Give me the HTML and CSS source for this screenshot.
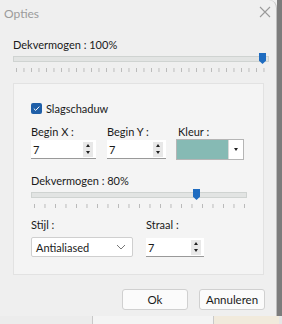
FILE: index.html
```html
<!DOCTYPE html>
<html>
<head>
<meta charset="utf-8">
<link rel="stylesheet" href="styles.css">
</head>
<body>
<div class="screen">
  <div class="dialog">
    <div class="titlebar">
      <span class="title">Opties</span>
      <svg class="close" width="12" height="12" viewBox="0 0 12 12"><path d="M1 1L11 11M11 1L1 11" stroke="#9a9a9a" stroke-width="1.1" fill="none"/></svg>
    </div>
    <div class="content">
      <div class="label">Dekvermogen : 100%</div>
      <div class="slider wide">
        <div class="track"></div>
        <div class="thumb" style="left: 246px"></div>
      </div>
      <div class="ticks wide-ticks"></div>
      <div class="group">
        <label class="check">
          <span class="box"><svg width="9" height="9" viewBox="0 0 9 9"><path d="M1.8 4.6L3.7 6.4L7.3 2.6" stroke="#fff" stroke-width="1" fill="none"/></svg></span>
          <span>Slagschaduw</span>
        </label>
        <div class="row three">
          <div class="field fx">
            <div class="flabel">Begin X :</div>
            <div class="spin"><span class="val">7</span><span class="arrows"><i class="up"></i><i class="down"></i></span></div>
          </div>
          <div class="field fy">
            <div class="flabel">Begin Y :</div>
            <div class="spin"><span class="val">7</span><span class="arrows"><i class="up"></i><i class="down"></i></span></div>
          </div>
          <div class="field fc">
            <div class="flabel">Kleur :</div>
            <div class="color"><span class="swatch"></span><span class="drop"><i class="down"></i></span></div>
          </div>
        </div>
        <div class="label inner">Dekvermogen : 80%</div>
        <div class="slider narrow">
          <div class="track"></div>
          <div class="thumb" style="left: 162px"></div>
        </div>
        <div class="ticks narrow-ticks"></div>
        <div class="row two">
          <div class="field fs">
            <div class="flabel">Stijl :</div>
            <div class="select"><span>Antialiased</span><svg width="10" height="6" viewBox="0 0 10 6"><path d="M1 1L5 5L9 1" stroke="#777" stroke-width="1" fill="none"/></svg></div>
          </div>
          <div class="field fr">
            <div class="flabel">Straal :</div>
            <div class="spin"><span class="val">7</span><span class="arrows"><i class="up"></i><i class="down"></i></span></div>
          </div>
        </div>
      </div>
      <div class="buttons">
        <button class="btn">Ok</button>
        <button class="btn">Annuleren</button>
      </div>
    </div>
  </div>
  <div class="taskstrip">
    <span class="seg s1"></span><span class="seg s2"></span><span class="seg s3"></span>
  </div>
</div>
</body>
</html>
```

FILE: styles.css
```css
html, body {
  margin: 0;
  padding: 0;
}
body {
  width: 282px;
  height: 324px;
  overflow: hidden;
  background: #8a8a8a;
  font-family: Lato, "Noto Sans", sans-serif;
  font-size: 11px;
  color: #1a1a1a;
}
.screen {
  position: relative;
  width: 282px;
  height: 324px;
  background: linear-gradient(to right, #efefef 0, #efefef 277px, #7c7c7c 277px);
}
.dialog {
  width: 277px;
  height: 316px;
  background: #efefef;
  border-top-right-radius: 8px;
  border-right: 1px solid #bdbdbd;
  box-sizing: border-box;
  display: flex;
  flex-direction: column;
}
.titlebar {
  height: 26px;
  display: flex;
  align-items: center;
  justify-content: space-between;
  padding: 0 5px 0 4px;
}
.title {
  color: #9b9b9b;
  font-size: 12px;
}
.close {
  margin-top: -2px;
}
.content {
  padding: 11px 0 0 13px;
  flex: 1;
  display: flex;
  flex-direction: column;
}
.label {
  line-height: 15px;
  height: 15px;
}
.slider {
  position: relative;
  height: 12px;
  margin-top: 1px;
}
.slider.wide { width: 256px; }
.slider.narrow { width: 216px; }
.track {
  position: absolute;
  left: 0; right: 0; top: 3px;
  height: 4px;
  background: #e2e4e3;
  border: 1px solid #cfd3d1;
}
.thumb {
  position: absolute;
  top: 0;
  width: 7px;
  height: 11px;
  background: #1f6cc0;
  clip-path: polygon(0 0, 100% 0, 100% 70%, 50% 100%, 0 70%);
}
.ticks {
  height: 4px;
  margin-top: 3px;
  background-image: linear-gradient(to right, #b9b9b9 1px, transparent 1px);
  background-repeat: repeat-x;
}
.wide-ticks {
  width: 250px;
  margin-left: 3px;
  background-size: 7.5px 4px;
}
.narrow-ticks {
  width: 212px;
  margin-left: 3px;
  background-size: 10.5px 4px;
}
.group {
  margin-top: 11px;
  width: 251px;
  height: 192px;
  box-sizing: border-box;
  background: #f4f4f4;
  border: 1px solid #e2e2e2;
  padding: 17px 0 0 17px;
}
.check {
  display: flex;
  align-items: center;
  gap: 4px;
  height: 15px;
}
.box {
  width: 11px;
  height: 11px;
  background: #1f5fa8;
  border-radius: 2px;
  display: flex;
  align-items: center;
  justify-content: center;
}
.row {
  display: flex;
}
.row.three {
  margin-top: 8px;
}
.flabel {
  line-height: 15px;
  height: 15px;
  margin-bottom: 1px;
}
.fx { width: 76px; }
.fy { width: 71px; }
.fs { width: 115px; }
.spin {
  height: 19px;
  background: #fff;
  border-bottom: 1px solid #999;
  display: flex;
  align-items: center;
  justify-content: space-between;
  box-sizing: border-box;
  padding-left: 2px;
}
.fx .spin { width: 65px; }
.fy .spin { width: 59px; }
.fr .spin { width: 58px; }
.arrows {
  width: 10px;
  height: 15px;
  margin-right: 3px;
  background: #e8e8e8;
  display: flex;
  flex-direction: column;
  align-items: center;
  justify-content: space-around;
}
.up, .down {
  display: block;
  width: 0; height: 0;
  border-left: 2.5px solid transparent;
  border-right: 2.5px solid transparent;
}
.up { border-bottom: 3px solid #222; }
.down { border-top: 3px solid #222; }
.color {
  width: 68px;
  height: 21px;
  margin-left: -2px;
  margin-top: -1px;
  box-sizing: border-box;
  border: 1px solid #b5b5b5;
  background: #fff;
  display: flex;
}
.swatch {
  width: 51px;
  background: #86bab4;
  border-right: 1px solid #d8d8d8;
}
.drop {
  flex: 1;
  display: flex;
  align-items: center;
  justify-content: center;
}
.label.inner {
  margin-top: 13px;
}
.narrow { margin-top: 1px; }
.row.two {
  margin-top: 9px;
}
.row.two .flabel {
  margin-bottom: 6px;
}
.select {
  width: 102px;
  height: 20px;
  box-sizing: border-box;
  background: #fff;
  border: 1px solid #cfcfcf;
  border-radius: 2px;
  display: flex;
  align-items: center;
  justify-content: space-between;
  padding: 0 6px 0 4px;
  margin-top: -1px;
}
.buttons {
  display: flex;
  gap: 11px;
  margin: 14px 0 0 109px;
}
.btn {
  width: 66px;
  height: 21px;
  font-family: inherit;
  font-size: 11.5px;
  color: #1a1a1a;
  background: #fbfbfb;
  border: 1px solid #d0d0d0;
  border-radius: 3px;
  padding: 0;
}
.taskstrip {
  height: 8px;
  display: flex;
  background: #e6e6e6;
}
.seg { display: block; height: 8px; }
.s1 { width: 92px; background: #ececec; border-right: 1px solid #c9c9c9; }
.s2 { width: 120px; background: #f4f4f4; border-right: 1px solid #c9c9c9; }
.s3 { width: 65px; background: #f1eadc; }
```
